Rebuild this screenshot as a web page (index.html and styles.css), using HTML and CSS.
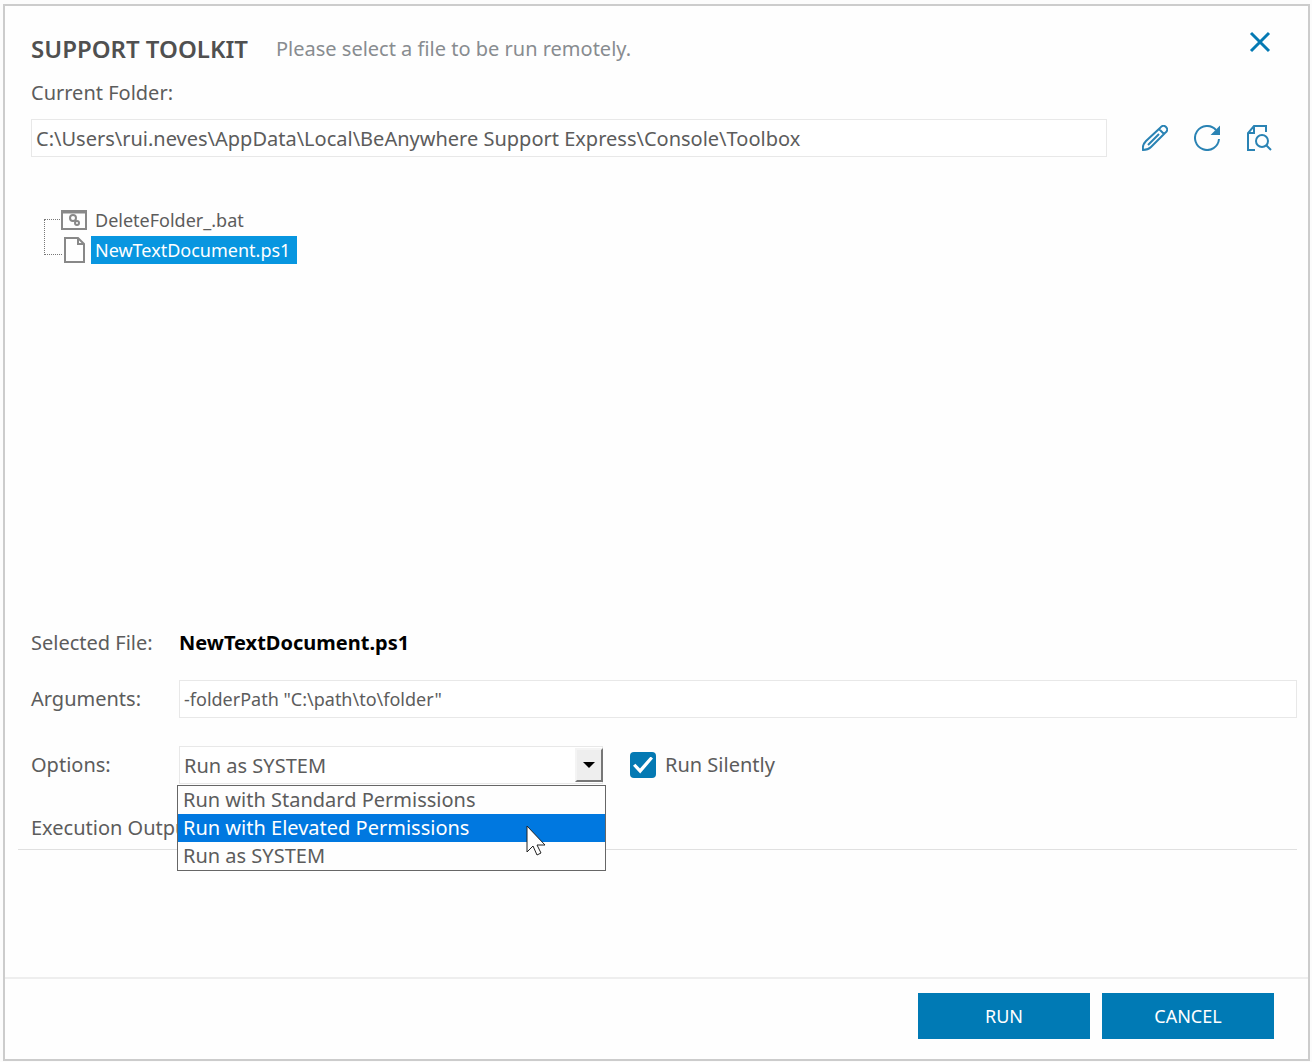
FILE: index.html
```html
<!DOCTYPE html>
<html lang="en">
    <head>
        <meta charset="utf-8" />
        <title>Support Toolkit</title>
        <link rel="stylesheet" href="styles.css">
    </head>
    <body>
        <form class="dialog">
            <header class="header">
                <h1>SUPPORT TOOLKIT</h1>
                <p>Please select a file to be run remotely.</p>
                <button type="button" class="icon close" aria-label="Close">
                    <svg viewBox="0 0 26 26"><path d="M4 3L22 21M22 3L4 21" stroke-width="3"/></svg>
                </button>
            </header>
            <label class="folderLabel" for="folder">Current Folder:</label>
            <div class="folder">
                <input type="text" id="folder" value="C:\Users\rui.neves\AppData\Local\BeAnywhere Support Express\Console\Toolbox">
                <button type="button" class="icon" aria-label="Edit">
                    <svg viewBox="0 0 26 26"><path d="M1 25Q0 20 4 16L18 3Q21 -1 24 2Q27 5 23 8L9 22Q6 25 1 25ZM17 4L22 9M6 20L17 9"/></svg>
                </button>
                <button type="button" class="icon" aria-label="Refresh">
                    <svg viewBox="0 0 26 26"><path d="M25 14A12 12 0 1 1 22 5"/><path class="solid" d="M25 3V9H19Z"/></svg>
                </button>
                <button type="button" class="icon" aria-label="Browse">
                    <svg viewBox="0 0 26 26"><path d="M9 25H2V8L8 1H20V7M2 8H8V1M20 20L25 25"/><circle cx="16" cy="16" r="6"/></svg>
                </button>
            </div>
            <ul class="tree">
                <li>
                    <svg class="fileIcon" viewBox="0 0 28 26"><path d="M2 4H26V22H2Z"/><path d="M2 5H26" stroke-width="3"/><circle cx="13" cy="11" r="3"/><circle cx="17" cy="16" r="2"/></svg>
                    <span>DeleteFolder_.bat</span>
                </li>
                <li class="selected">
                    <svg class="fileIcon" viewBox="0 0 28 26"><path d="M5 1H18L24 7V25H5ZM18 1V7H24"/></svg>
                    <span>NewTextDocument.ps1</span>
                </li>
            </ul>
            <div class="row fileRow">
                <span class="name">Selected File:</span>
                <strong>NewTextDocument.ps1</strong>
            </div>
            <div class="row argsRow">
                <label class="name" for="args">Arguments:</label>
                <input type="text" id="args" value='-folderPath "C:\path\to\folder"'>
            </div>
            <div class="row">
                <label class="name" for="runAs">Options:</label>
                <div class="combo">
                    <select id="runAs">
                        <option>Run with Standard Permissions</option>
                        <option>Run with Elevated Permissions</option>
                        <option selected>Run as SYSTEM</option>
                    </select>
                    <span class="arrow"></span>
                    <ul class="list" role="listbox" aria-label="Options">
                        <li role="option">Run with Standard Permissions</li>
                        <li role="option" class="hover">Run with Elevated Permissions</li>
                        <li role="option">Run as SYSTEM</li>
                    </ul>
                    <svg class="cursor" viewBox="0 0 20 32"><path d="M1 1V27L7 21L11 30L15 28L11 20H19Z"/></svg>
                </div>
                <input type="checkbox" id="silent" checked>
                <label for="silent">Run Silently</label>
            </div>
            <h2>Execution Output:</h2>
            <footer class="footer">
                <button type="submit">RUN</button>
                <button type="button">CANCEL</button>
            </footer>
        </form>
    </body>
</html>
```

FILE: styles.css
```css
* {
    box-sizing: border-box;
}
body {
    margin: 0;
    min-height: 100vh;
    padding: 4px 2px 1px 3px;
    display: flex;
    background-color: #fcfcfc;
}
body, input, select, button {
    font-family: "Noto Sans", "Open Sans", sans-serif;
    font-size: 20px;
    color: #5c5c5c;
}
h1, h2, p, ul {
    margin: 0;
    padding: 0;
}
ul {
    list-style-type: none;
}
.dialog {
    flex: 1;
    display: flex;
    flex-direction: column;
    padding: 24px 11px 0 26px;
    border: solid 2px #ccc;
    background-color: #fefefe;
    line-height: 28px;
}
.header {
    display: flex;
    align-items: center;
    height: 38px;
    padding-right: 24px;
}
.header h1 {
    font-size: 24px;
    font-weight: 600;
    color: #505050;
}
.header p {
    margin-left: 28px;
    color: #888c90;
}
.icon {
    width: 26px;
    height: 26px;
    padding: 0;
    border: 0;
    background: none;
}
.icon svg {
    display: block;
    fill: none;
    stroke: #2a83b4;
    stroke-width: 2;
}
.icon .solid {
    fill: #2a83b4;
}
.close {
    margin-left: auto;
    align-self: flex-start;
}
.close svg {
    stroke: #0479b3;
}
.folderLabel {
    margin-top: 11px;
}
.folder {
    display: flex;
    align-items: center;
    margin-top: 12px;
    padding-right: 25px;
}
.folder .icon {
    margin-left: 26px;
}
.folder input + .icon {
    margin-left: 35px;
}
input[type=text], select {
    flex: 1;
    min-width: 0;
    height: 38px;
    padding: 0 4px;
    border: solid 1px #e8e8e8;
    background-color: #fff;
    border-radius: 0;
}
.tree {
    position: relative;
    margin: 48px 0 0 29px;
    font-size: 18px;
}
/* dotted line joining the two files */
.tree::before {
    content: "";
    position: absolute;
    left: -16px;
    top: 14px;
    width: 17px;
    height: 34px;
    border: dotted 1px #777;
    border-right: 0;
}
.tree li {
    display: flex;
    align-items: center;
    height: 30px;
}
.tree span {
    padding: 0 7px 0 4px;
}
.fileIcon {
    position: relative;
    width: 28px;
    height: 26px;
    margin-right: 3px;
    fill: #fefefe;
    stroke: #888;
    stroke-width: 2;
}
.tree .selected span {
    background-color: #0896e0;
    color: #fff;
}
.row {
    display: flex;
    align-items: center;
    min-height: 38px;
    margin-top: 28px;
}
.name {
    width: 148px;
}
.fileRow {
    margin-top: 359px;
}
.fileRow strong {
    color: #000;
}
.argsRow {
    margin-top: 18px;
}
.argsRow input {
    font-size: 18px;
}
.combo {
    position: relative;
    display: flex;
    width: 424px;
    margin-right: 27px;
}
select {
    appearance: none;
}
.arrow {
    position: absolute;
    top: 2px;
    right: 0;
    width: 28px;
    height: 34px;
    border: solid 2px #f4f4f4;
    border-right-color: #777;
    border-bottom-color: #777;
    background-color: #eee;
    pointer-events: none;
}
.arrow::after {
    content: "";
    position: absolute;
    left: 6px;
    top: 12px;
    border: solid 6px transparent;
    border-top-color: #000;
    border-bottom: 0;
}
.list {
    position: absolute;
    top: 39px;
    left: -2px;
    width: 429px;
    border: solid 1px #666;
    background-color: #fefefe;
    z-index: 1;
}
.list li {
    height: 28px;
    padding-left: 5px;
}
.list .hover {
    background-color: #0078e0;
    color: #fff;
}
.cursor {
    position: absolute;
    left: 347px;
    top: 79px;
    width: 20px;
    height: 32px;
    fill: #fff;
    stroke: #222;
    stroke-width: 1;
    z-index: 2;
}
input[type=checkbox] {
    appearance: none;
    display: grid;
    place-items: center;
    width: 26px;
    height: 26px;
    margin: 0 9px 0 0;
    border-radius: 4px;
    background-color: #0479b3;
}
input[type=checkbox]:checked::before {
    content: "";
    width: 20px;
    height: 17px;
    background-color: #fff;
    clip-path: polygon(0 55%, 12% 42%, 35% 70%, 88% 0, 100% 12%, 36% 100%);
}
h2 {
    margin: 30px 0 0 -13px;
    padding: 0 0 7px 13px;
    border-bottom: solid 1px #e0e0e0;
    font-size: 20px;
    font-weight: normal;
}
.footer {
    display: flex;
    justify-content: flex-end;
    gap: 12px;
    margin: auto -11px 0 -26px;
    padding: 14px 34px 20px;
    border-top: solid 2px #eee;
}
.footer button {
    width: 172px;
    height: 46px;
    border: 0;
    background-color: #007ab5;
    color: #fff;
    font-size: 18px;
}
```
